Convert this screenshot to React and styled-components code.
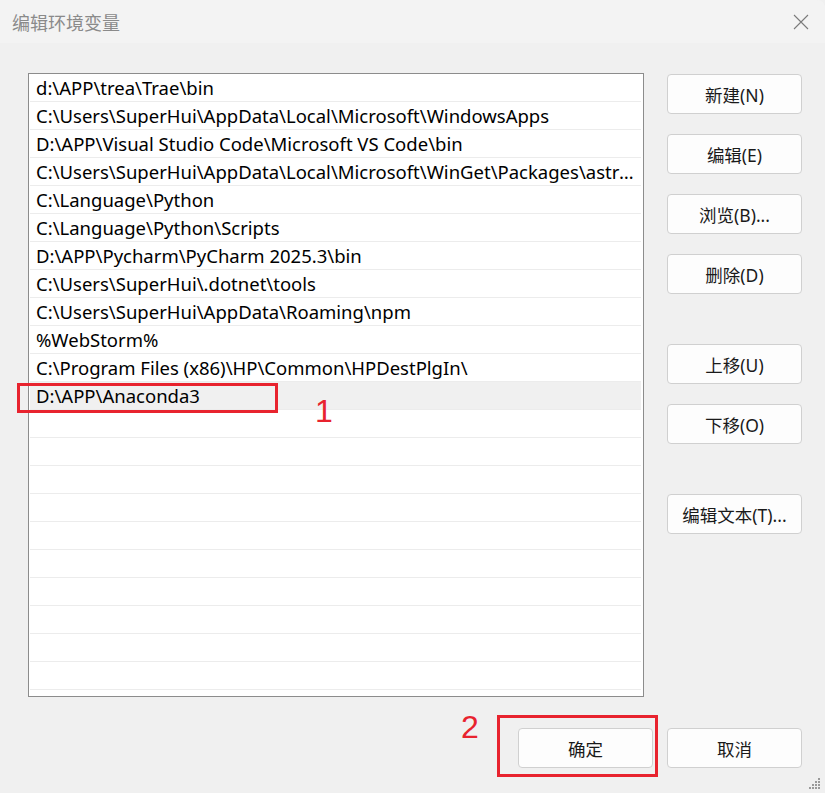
import styled, { createGlobalStyle } from 'styled-components';

const GlobalStyle = createGlobalStyle`
    html, body {
        margin: 0;
        padding: 0;
        background: #f0f0f0;
    }
    * {
        box-sizing: border-box;
    }
`;

const Window = styled.div`
    position: relative;
    width: 825px;
    height: 793px;
    background: #f0f0f0;
    font-family: "Noto Sans", "Noto Sans CJK SC", sans-serif;
    color: #000;
    overflow: hidden;
`;

const TitleBar = styled.div`
    height: 43px;
    display: flex;
    align-items: center;
    justify-content: space-between;
    padding: 0 16px 0 12px;
    background: #f3f3f3;
    border-top-right-radius: 8px;

    h1 {
        margin: 0;
        font-size: 18px;
        font-weight: 400;
        color: #8a8a8a;
        font-family: "Noto Sans CJK SC", sans-serif;
    }
`;

const Body = styled.div`
    padding: 30px 23px 0 28px;
    display: flex;
    flex-direction: column;
`;

const Top = styled.div`
    display: flex;
    gap: 23px;
`;

const List = styled.div`
    width: 616px;
    height: 624px;
    border: 1px solid #8c8c8c;
    background: #fff;
    padding: 0 2px 0 1px;
    overflow: hidden;
`;

const Row = styled.div`
    height: 28px;
    border-bottom: 1px solid #ececec;
    padding: 0 0 0 6px;
    display: flex;
    align-items: center;
    font-size: 18.5px;
    background: ${p => (p.selected ? '#f0f0f0' : '#fff')};
    white-space: nowrap;
    overflow: hidden;

    span {
        overflow: hidden;
        text-overflow: ellipsis;
        padding-right: 6px;
    }
`;

const Side = styled.div`
    width: 135px;
    display: flex;
    flex-direction: column;
    padding-top: 1px;
`;

const Button = styled.button`
    width: 135px;
    height: 40px;
    margin-bottom: ${p => p.gap || 20}px;
    background: #fdfdfd;
    border: 1px solid #d0d0d0;
    border-radius: 4px;
    font-family: "Noto Sans", "Noto Sans CJK SC", sans-serif;
    font-size: 17.5px;
    color: #1a1a1a;
    padding: 0;
    cursor: default;
    white-space: nowrap;
`;

const Bottom = styled.div`
    display: flex;
    justify-content: flex-end;
    gap: 14px;
    margin-top: 31px;
`;

const Mark = styled.div`
    position: absolute;
    border: 3px solid #e8232e;
`;

const Num = styled.div`
    position: absolute;
    color: #e8232e;
    font-family: "Liberation Sans", sans-serif;
    font-size: 32px;
    line-height: 1;
`;

const Grip = styled.svg`
    position: absolute;
    right: 4px;
    bottom: 3px;
`;

const paths = [
    'd:\\APP\\trea\\Trae\\bin',
    'C:\\Users\\SuperHui\\AppData\\Local\\Microsoft\\WindowsApps',
    'D:\\APP\\Visual Studio Code\\Microsoft VS Code\\bin',
    'C:\\Users\\SuperHui\\AppData\\Local\\Microsoft\\WinGet\\Packages\\astral-sh.uv_Microsoft.Winget.Source_8wekyb3d8bbwe',
    'C:\\Language\\Python',
    'C:\\Language\\Python\\Scripts',
    'D:\\APP\\Pycharm\\PyCharm 2025.3\\bin',
    'C:\\Users\\SuperHui\\.dotnet\\tools',
    'C:\\Users\\SuperHui\\AppData\\Roaming\\npm',
    '%WebStorm%',
    'C:\\Program Files (x86)\\HP\\Common\\HPDestPlgIn\\',
    'D:\\APP\\Anaconda3',
];

const rows = [...paths, ...Array(11).fill('')];

const App = () => {
    return (
        <Window>
            <GlobalStyle />
            <TitleBar>
                <h1>编辑环境变量</h1>
                <svg width="16" height="16" viewBox="0 0 16 16">
                    <path d="M1 1 L15 15 M15 1 L1 15" stroke="#7a7a7a" strokeWidth="1.1" />
                </svg>
            </TitleBar>
            <Body>
                <Top>
                    <List>
                        {rows.map((p, i) => (
                            <Row key={i} selected={i === 11}>
                                <span>{p}</span>
                            </Row>
                        ))}
                    </List>
                    <Side>
                        <Button>新建(N)</Button>
                        <Button>编辑(E)</Button>
                        <Button>浏览(B)...</Button>
                        <Button gap={50}>删除(D)</Button>
                        <Button>上移(U)</Button>
                        <Button gap={50}>下移(O)</Button>
                        <Button>编辑文本(T)...</Button>
                    </Side>
                </Top>
                <Bottom>
                    <Button gap={0}>确定</Button>
                    <Button gap={0}>取消</Button>
                </Bottom>
            </Body>

            <Mark style={{ left: 17, top: 383, width: 261, height: 30 }} />
            <Num style={{ left: 315, top: 395 }}>1</Num>
            <Mark style={{ left: 497, top: 715, width: 161, height: 62 }} />
            <Num style={{ left: 461, top: 711 }}>2</Num>

            <Grip width="14" height="14" viewBox="0 0 14 14">
                {[[11, 2], [8, 5], [11, 5], [5, 8], [8, 8], [11, 8], [2, 11], [5, 11], [8, 11], [11, 11]].map(([x, y]) => (
                    <rect key={`${x}-${y}`} x={x} y={y} width="2" height="2" fill="#9a9a9a" />
                ))}
            </Grip>
        </Window>
    );
};

export default App;
